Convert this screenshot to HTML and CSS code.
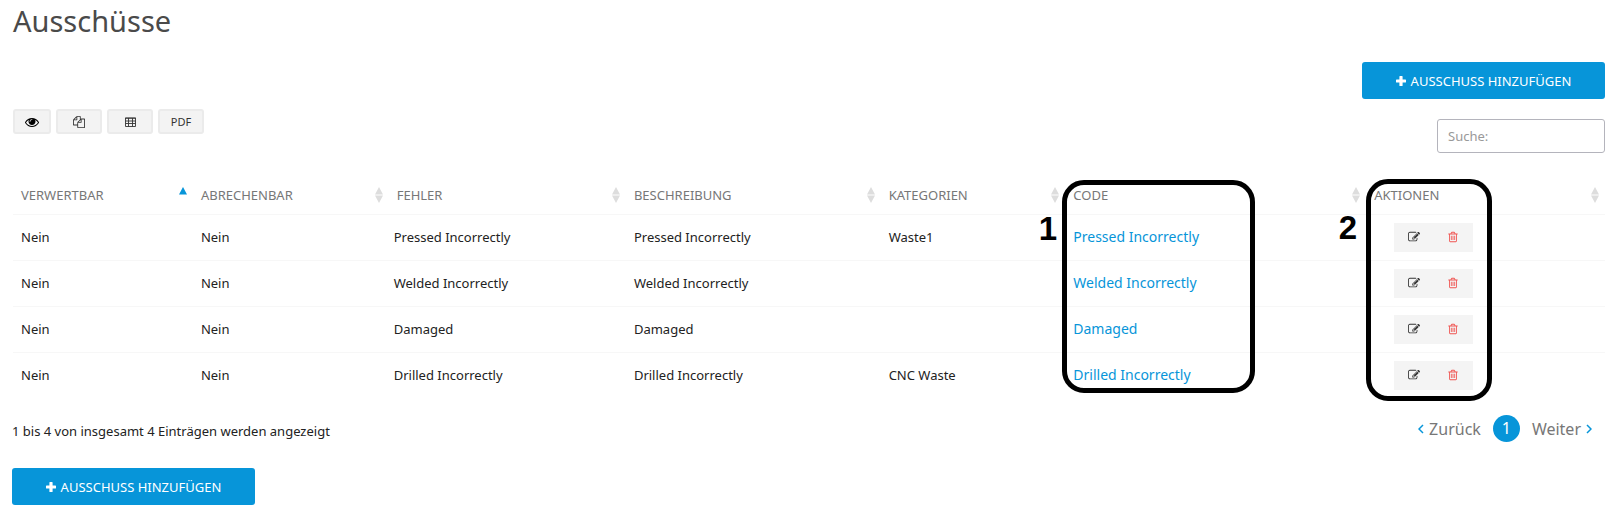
FILE: index.html
```html
<!DOCTYPE html>
<html lang="de">
<head>
<meta charset="utf-8">
<title>Ausschüsse</title>
<link rel="stylesheet" href="styles.css">
</head>
<body>
<svg class="sprite" aria-hidden="true">
  <symbol id="eye" viewBox="0 0 1792 1792"><path d="M1664 960q-152-236-381-353 61 104 61 225 0 185-131.500 316.500t-316.500 131.500-316.500-131.500-131.500-316.500q0-121 61-225-229 117-381 353 133 205 333.500 326.500t434.500 121.500 434.500-121.500 333.500-326.500zm-720-384q0-20-14-34t-34-14q-125 0-214.500 89.500t-89.500 214.500q0 20 14 34t34 14 34-14 14-34q0-86 61-147t147-61q20 0 34-14t14-34zm848 384q0 34-20 69-140 230-376.500 368.500t-499.500 138.500-499.500-139-376.500-368q-20-35-20-69t20-69q140-229 376.500-368t499.500-139 499.500 139 376.500 368q20 35 20 69z"/></symbol>
  <symbol id="copy" viewBox="0 0 1792 1792"><path d="M1696 384q40 0 68 28t28 68v1216q0 40-28 68t-68 28h-960q-40 0-68-28t-28-68v-288h-544q-40 0-68-28t-28-68v-672q0-40 20-88t48-76l408-408q28-28 76-48t88-20h416q40 0 68 28t28 68v328q68-40 128-40h416zm-544 213l-299 299h299v-299zm-640-384l-299 299h299v-299zm196 647l316-316v-416h-384v416q0 40-28 68t-68 28h-416v640h512v-256q0-40 20-88t48-76zm956 804v-1152h-384v416q0 40-28 68t-68 28h-416v640h896z"/></symbol>
  <symbol id="grid" viewBox="0 0 11 10"><path d="M.5 1h10v8.500H.5zM0 1.200h11M.5 4h10M.5 6.500h10M3.500 1v8.500M7.500 1v8.500" fill="none" stroke="currentColor" stroke-width=".9"/></symbol>
  <symbol id="plus" viewBox="0 0 10 10"><path d="M4 0h2q.6 0 .6.600v2.800h2.800q.6 0 .6.600v2q0 .6-.6.600H6.600v2.800q0 .6-.6.600H4q-.6 0-.6-.6V6.600H.6Q0 6.600 0 6V4q0-.6.600-.6h2.800V.6Q3.400 0 4 0z"/></symbol>
  <symbol id="edit" viewBox="0 0 1792 1792"><path d="M888 1184l116-116-152-152-116 116v56h96v96h56zm440-720q-16-16-33 1l-350 350q-17 17-1 33t33-1l350-350q17-17 1-33zm80 594v190q0 119-84.500 203.500t-203.500 84.500h-832q-119 0-203.500-84.500t-84.500-203.500v-832q0-119 84.500-203.500t203.500-84.500h832q63 0 117 25 15 7 18 23 3 17-9 29l-49 49q-14 14-32 8-23-6-45-6h-832q-66 0-113 47t-47 113v832q0 66 47 113t113 47h832q66 0 113-47t47-113v-126q0-13 9-22l64-64q15-15 35-7t20 29zm-96-738l288 288-672 672h-288v-288zm444 132l-92 92-288-288 92-92q28-28 68-28t68 28l152 152q28 28 28 68t-28 68z"/></symbol>
  <symbol id="trash" viewBox="0 0 1792 1792"><path d="M704 736v576q0 14-9 23t-23 9h-64q-14 0-23-9t-9-23v-576q0-14 9-23t23-9h64q14 0 23 9t9 23zm256 0v576q0 14-9 23t-23 9h-64q-14 0-23-9t-9-23v-576q0-14 9-23t23-9h64q14 0 23 9t9 23zm256 0v576q0 14-9 23t-23 9h-64q-14 0-23-9t-9-23v-576q0-14 9-23t23-9h64q14 0 23 9t9 23zm128 724v-948h-896v948q0 22 7 40.500t14.500 27 10.500 8.500h832q3 0 10.500-8.500t14.500-27 7-40.500zm-672-1076h448l-48-117q-7-9-17-11h-317q-10 2-17 11zm928 32v64q0 14-9 23t-23 9h-96v948q0 83-47 143.500t-113 60.500h-832q-66 0-113-58.500t-47-141.500v-952h-96q-14 0-23-9t-9-23v-64q0-14 9-23t23-9h309l70-167q15-37 54-63t79-26h320q40 0 79 26t54 63l70 167h309q14 0 23 9t9 23z"/></symbol>
  <symbol id="left" viewBox="0 0 6 10"><path d="M5 1L1 5l4 4" fill="none" stroke="currentColor" stroke-width="1.500"/></symbol>
  <symbol id="right" viewBox="0 0 6 10"><path d="M1 1l4 4-4 4" fill="none" stroke="currentColor" stroke-width="1.500"/></symbol>
  <symbol id="sort" viewBox="0 0 8 16"><path d="M4 0l4 7.500H0zM0 8.500h8l-4 7.500z"/></symbol>
  <symbol id="asc" viewBox="0 0 8 16"><path d="M4 0l4 7.500H0z"/></symbol>
</svg>
<main class="page">
  <h1 class="title">Ausschüsse</h1>
  <div class="add-row">
    <button class="primary" type="button"><svg class="icon-plus"><use href="#plus"/></svg>AUSSCHUSS HINZUFÜGEN</button>
  </div>
  <div class="toolbar">
    <div class="tools">
      <button class="tool tool-view" type="button" aria-label="Spalten anzeigen"><svg class="icon-eye"><use href="#eye"/></svg></button>
      <button class="tool" type="button" aria-label="Kopieren"><svg class="icon-tool"><use href="#copy"/></svg></button>
      <button class="tool" type="button" aria-label="Tabelle exportieren"><svg class="icon-grid"><use href="#grid"/></svg></button>
      <button class="tool" type="button">PDF</button>
    </div>
    <input class="search" type="search" placeholder="Suche:" aria-label="Suche">
  </div>
  <div class="table-area">
    <table class="scraps">
      <colgroup>
        <col class="col-usable"><col class="col-billable"><col class="col-error"><col class="col-description"><col class="col-category"><col class="col-code"><col class="col-actions">
      </colgroup>
      <thead>
        <tr>
          <th><span class="head">VERWERTBAR<svg class="sort sort-active"><use href="#asc"/></svg></span></th>
          <th><span class="head">ABRECHENBAR<svg class="sort"><use href="#sort"/></svg></span></th>
          <th><span class="head">FEHLER<svg class="sort"><use href="#sort"/></svg></span></th>
          <th><span class="head">BESCHREIBUNG<svg class="sort"><use href="#sort"/></svg></span></th>
          <th><span class="head">KATEGORIEN<svg class="sort"><use href="#sort"/></svg></span></th>
          <th><span class="head">CODE<svg class="sort"><use href="#sort"/></svg></span></th>
          <th><span class="head">AKTIONEN<svg class="sort"><use href="#sort"/></svg></span></th>
        </tr>
      </thead>
      <tbody>
        <tr>
          <td>Nein</td><td>Nein</td><td class="error">Pressed Incorrectly</td><td>Pressed Incorrectly</td><td>Waste1</td>
          <td><a class="code" href="#">Pressed Incorrectly</a></td>
          <td><div class="actions"><button class="action" type="button" aria-label="Bearbeiten"><svg class="icon-action"><use href="#edit"/></svg></button><button class="action delete" type="button" aria-label="Löschen"><svg class="icon-action"><use href="#trash"/></svg></button></div></td>
        </tr>
        <tr>
          <td>Nein</td><td>Nein</td><td class="error">Welded Incorrectly</td><td>Welded Incorrectly</td><td></td>
          <td><a class="code" href="#">Welded Incorrectly</a></td>
          <td><div class="actions"><button class="action" type="button" aria-label="Bearbeiten"><svg class="icon-action"><use href="#edit"/></svg></button><button class="action delete" type="button" aria-label="Löschen"><svg class="icon-action"><use href="#trash"/></svg></button></div></td>
        </tr>
        <tr>
          <td>Nein</td><td>Nein</td><td class="error">Damaged</td><td>Damaged</td><td></td>
          <td><a class="code" href="#">Damaged</a></td>
          <td><div class="actions"><button class="action" type="button" aria-label="Bearbeiten"><svg class="icon-action"><use href="#edit"/></svg></button><button class="action delete" type="button" aria-label="Löschen"><svg class="icon-action"><use href="#trash"/></svg></button></div></td>
        </tr>
        <tr>
          <td>Nein</td><td>Nein</td><td class="error">Drilled Incorrectly</td><td>Drilled Incorrectly</td><td>CNC Waste</td>
          <td><a class="code" href="#">Drilled Incorrectly</a></td>
          <td><div class="actions"><button class="action" type="button" aria-label="Bearbeiten"><svg class="icon-action"><use href="#edit"/></svg></button><button class="action delete" type="button" aria-label="Löschen"><svg class="icon-action"><use href="#trash"/></svg></button></div></td>
        </tr>
      </tbody>
    </table>
    <div class="callout callout-code"><span class="callout-number">1</span></div>
    <div class="callout callout-actions"><span class="callout-number">2</span></div>
  </div>
  <div class="table-footer">
    <p class="summary">1 bis 4 von insgesamt 4 Einträgen werden angezeigt</p>
    <nav class="pager" aria-label="Seiten">
      <a class="page-link" href="#"><svg class="chevron"><use href="#left"/></svg>Zurück</a>
      <a class="page-current" href="#" aria-current="page">1</a>
      <a class="page-link" href="#">Weiter<svg class="chevron"><use href="#right"/></svg></a>
    </nav>
  </div>
  <button class="primary" type="button"><svg class="icon-plus"><use href="#plus"/></svg>AUSSCHUSS HINZUFÜGEN</button>
</main>
</body>
</html>
```
FILE: styles.css
```css
* { box-sizing: border-box; }

body {
  margin: 0;
  background: #fff;
  color: #222;
  font: 13px/20px "Noto Sans", "Open Sans", sans-serif;
}

button, input { font: inherit; }
svg { fill: currentColor; flex: none; }
.sprite { display: none; }
.page { padding: 0 11px 14px 12px; }

.title {
  margin: 0;
  padding-left: 1px;
  color: #4a4a4a;
  font-size: 29px;
  font-weight: 400;
  line-height: 42px;
}

.add-row {
  display: flex;
  justify-content: flex-end;
  padding-top: 20px;
}

.primary {
  display: flex;
  align-items: center;
  justify-content: center;
  gap: 5px;
  min-width: 243px;
  height: 37px;
  padding: 0 28px;
  border: 0;
  border-radius: 3px;
  background: #0795d9;
  color: #fff;
}

.icon-plus { width: 10px; height: 10px; }

.toolbar {
  display: flex;
  justify-content: space-between;
  align-items: flex-start;
  padding-top: 10px;
}

.tools { display: flex; gap: 5px; padding-left: 1px; }

.tool {
  display: flex;
  align-items: center;
  justify-content: center;
  width: 46px;
  height: 25px;
  padding: 0;
  border: 2px solid #ebebeb;
  border-radius: 3px;
  background: #f3f3f3;
  color: #333;
  font-size: 11px;
}

.tool-view { width: 38px; color: #000; }
.icon-eye { width: 14px; height: 14px; }
.icon-tool { width: 12px; height: 12px; }
.icon-grid { width: 11px; height: 10px; }

.search {
  width: 168px;
  height: 34px;
  margin-top: 10px;
  padding: 0 10px;
  border: 1px solid #b4b4bc;
  border-radius: 3px;
  background: #fff;
  appearance: none;
}

.search::placeholder { color: #999; }

.table-area {
  position: relative;
  margin: 23px 0 0 1px;
}

.scraps {
  width: 100%;
  table-layout: fixed;
  border-collapse: collapse;
}

.col-usable { width: 11.3%; }
.col-billable { width: 12.3%; }
.col-error { width: 14.9%; }
.col-description { width: 16%; }
.col-category { width: 11.6%; }
.col-code { width: 18.9%; }
.col-actions { width: 15%; }

.scraps th {
  height: 38px;
  padding: 0 6px 0 8px;
  color: #777;
  font-weight: 400;
  text-align: left;
}

.head {
  display: flex;
  justify-content: space-between;
  align-items: center;
}

.sort { width: 8px; height: 16px; color: #ddd; }
.sort-active { color: #0795d9; }

.scraps td {
  height: 46px;
  padding: 0 8px;
  border-top: 1px solid #f7f7f7;
}

.scraps .error { padding-left: 5px; }

.code {
  color: #0795d9;
  font-size: 14px;
  text-decoration: none;
}

.actions {
  display: flex;
  width: 79px;
  height: 29px;
  margin-left: 20px;
  background: #f4f4f4;
}

.action {
  display: flex;
  flex: 1;
  align-items: center;
  justify-content: center;
  padding: 0;
  border: 0;
  background: none;
  color: #333;
}

.delete { color: #ef5350; }
.icon-action { width: 12px; height: 12px; }

.callout {
  position: absolute;
  border: 5px solid #000;
  border-radius: 22px;
  pointer-events: none;
}

.callout-code { top: 4px; bottom: 5px; left: 65.9%; width: 12.1%; }
.callout-actions { top: 3px; bottom: -3px; left: 85%; width: 7.9%; }

.callout-number {
  position: absolute;
  top: 24px;
  right: 100%;
  padding-right: 10px;
  color: #000;
  font: bold 33px/40px "Liberation Sans", Arial, sans-serif;
}

.callout-actions .callout-number { padding-right: 14px; }

.table-footer {
  display: flex;
  justify-content: space-between;
  padding-top: 17px;
}

.summary { margin: 0; padding-top: 6px; }

.pager {
  display: flex;
  align-items: center;
  gap: 12px;
  height: 27px;
  margin-bottom: 26px;
  padding-right: 13px;
  font-size: 16px;
}

.page-link {
  display: flex;
  align-items: center;
  gap: 5px;
  color: #777;
  text-decoration: none;
}

.chevron { width: 6px; height: 10px; color: #0795d9; }

.page-current {
  width: 27px;
  border-radius: 50%;
  background: #0795d9;
  color: #fff;
  line-height: 27px;
  text-align: center;
  text-decoration: none;
}
```
